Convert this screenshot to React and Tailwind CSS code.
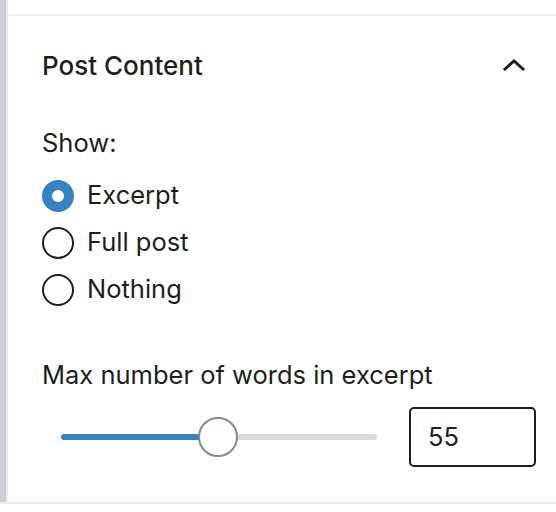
import React, { useState } from 'react';

const options = ['Excerpt', 'Full post', 'Nothing'];

const Radio = ({ label, checked, onSelect }) => (
    <label className="flex items-center h-[47px] cursor-pointer" onClick={onSelect}>
        {checked ? (
            <span className="w-[32px] h-[32px] rounded-full bg-[#3582c4] flex items-center justify-center">
                <span className="w-[12px] h-[12px] rounded-full bg-white" />
            </span>
        ) : (
            <span className="w-[32px] h-[32px] rounded-full border-2 border-[#1e1e1e] bg-white" />
        )}
        <span className="ml-[13px]">{label}</span>
    </label>
);

const App = () => {
    const [show, setShow] = useState('Excerpt');
    const [words] = useState(55);

    return (
        <div className="w-[556px] h-[512px] bg-white text-[#1e1e1e] font-['Inter',sans-serif] text-[25.5px] overflow-hidden">
            <div className="flex h-[502px]">
                <div className="w-[8px] bg-[#ccd0d4]" />
                <div className="w-[2px] bg-[#ececec]" />
                <div className="flex-1 pt-[14px]">
                    <div className="border-t-2 border-[#f0f0f0]">
                        {/* Panel header */}
                        <div className="flex items-center justify-between h-[98px] pl-[34px] pr-[30px]">
                            <h2 className="text-[26px] font-medium">Post Content</h2>
                            <svg width="24" height="24" viewBox="0 0 24 24" fill="none" stroke="#1e1e1e" strokeWidth="3" strokeLinecap="square">
                                <path d="M3 16 L12 8 L21 16" />
                            </svg>
                        </div>

                        {/* Show options */}
                        <div className="pl-[34px] pr-[20px]">
                            <p className="leading-[30px] mt-[14px]">Show:</p>
                            <div className="mt-[14px]">
                                {options.map(opt => (
                                    <Radio key={opt} label={opt} checked={show === opt} onSelect={() => setShow(opt)} />
                                ))}
                            </div>

                            <p className="leading-[30px] mt-[47px]">Max number of words in excerpt</p>
                            <div className="flex items-center mt-[17px]">
                                <div className="relative w-[316px] h-[6px] ml-[19px] rounded-full bg-[#dcdcde]">
                                    <div className="absolute left-0 top-0 h-full w-[145px] rounded-full bg-[#3582c4]" />
                                    <div className="absolute left-[137px] top-[-17px] w-[40px] h-[40px] rounded-full border-2 border-[#7e8993] bg-white" />
                                </div>
                                <div className="ml-[32px] w-[127px] h-[60px] border-2 border-[#1e1e1e] rounded-[5px] flex items-center pl-[17px]">
                                    {words}
                                </div>
                            </div>
                        </div>
                    </div>
                </div>
            </div>
            <div className="h-[2px] bg-[#ececec]" />
        </div>
    );
};

export default App;
